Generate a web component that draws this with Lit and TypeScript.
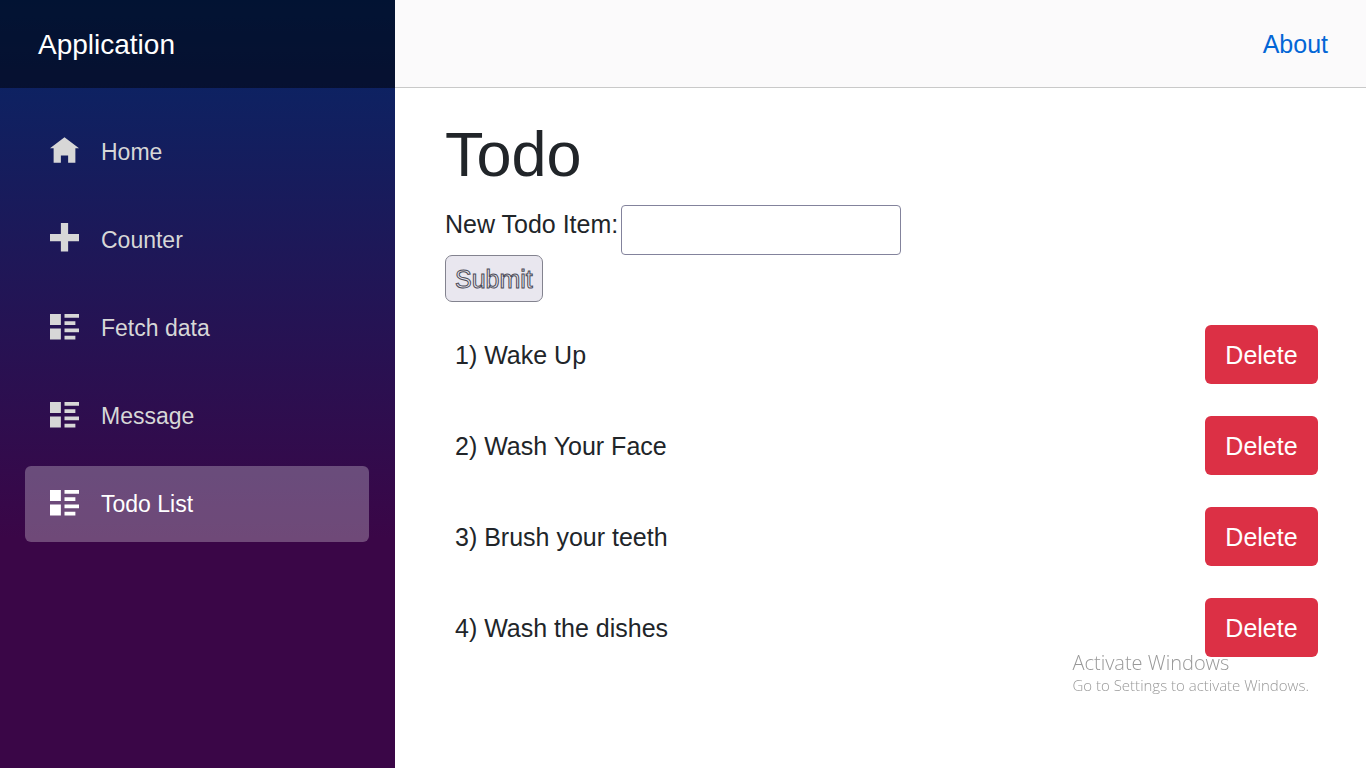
import { LitElement, html, css, svg } from "lit";
import { customElement, property, state } from "lit/decorators.js";
import { classMap } from "lit/directives/class-map.js";

const icons = {
  home: svg`<path d="M4-.2 0 2.8h1v4h2v-2h2v2h2v-4h1L4-.2z" />`,
  plus: svg`<path d="M3-.8v3H0v2h3v2.8h2V4.2h3v-2H5v-3H3z" />`,
  list: svg`<path d="M0 0v3h3V0H0zm4 0v1h4V0H4zm0 2v1h3V2H4zM0 4v3h3V4H0zm4 0v1h4V4H4zm0 2v1h3V6H4z" />`,
};

type IconName = keyof typeof icons;

interface NavItem {
  label: string;
  icon: IconName;
  active?: boolean;
}

@customElement("nav-menu")
export class NavMenu extends LitElement {
  @property({ attribute: false }) items: NavItem[] = [];

  static styles = css`
    :host {
      display: block;
    }
    .brand-row {
      display: flex;
      align-items: center;
      box-sizing: border-box;
      height: 88px;
      padding: 2px 38px 0;
      background: rgba(0, 0, 0, 0.5);
    }
    .brand {
      font-size: 28px;
      line-height: 42px;
      color: #fff;
      text-decoration: none;
    }
    .list {
      display: flex;
      flex-direction: column;
      gap: 12px;
      margin: 0;
      padding: 26px 26px 26px 25px;
      list-style: none;
    }
    .link {
      display: flex;
      align-items: center;
      height: 76px;
      padding: 0 25px;
      border-radius: 6px;
      font-size: 23px;
      color: #d7d7d7;
      text-decoration: none;
    }
    .link.active {
      background: rgba(255, 255, 255, 0.27);
      color: #fff;
    }
    .icon {
      flex: none;
      width: 29px;
      height: 29px;
      margin-right: 22px;
      overflow: visible;
      fill: currentColor;
    }
  `;

  render() {
    return html`
      <div class="brand-row"><a class="brand" href="#">Application</a></div>
      <nav>
        <ul class="list">
          ${this.items.map(
            (item) => html`<li>
              <a class=${classMap({ link: true, active: !!item.active })} href="#">
                <svg class="icon" viewBox="0 0 8 8" aria-hidden="true">${icons[item.icon]}</svg>
                ${item.label}
              </a>
            </li>`
          )}
        </ul>
      </nav>
    `;
  }
}

@customElement("todo-page")
export class TodoPage extends LitElement {
  @state() private todos = ["Wake Up", "Wash Your Face", "Brush your teeth", "Wash the dishes"];

  static styles = css`
    :host {
      display: block;
      padding: 28px 38px 28px 50px;
    }
    .title {
      margin: 0 0 13px;
      font-size: 63px;
      font-weight: 400;
      line-height: 76px;
    }
    .form {
      display: flex;
      flex-direction: column;
      align-items: flex-start;
    }
    .field {
      display: flex;
      align-items: flex-start;
      gap: 3px;
    }
    .input {
      box-sizing: border-box;
      width: 280px;
      height: 50px;
      padding: 2px 4px;
      border: 1px solid #83839c;
      border-radius: 4px;
      background: #fff;
      font: inherit;
    }
    .submit {
      height: 47px;
      padding: 0 9px;
      border: 1px solid #83838f;
      border-radius: 7px;
      background: #e9e7ef;
      font: inherit;
      color: #e9e7ef;
      -webkit-text-stroke: 1px #4c4c58;
    }
    .list {
      margin: 7px 0 0;
      padding: 0;
      list-style: none;
    }
    .row {
      display: flex;
      align-items: center;
      justify-content: space-between;
      padding: 16px 10px;
    }
    .delete {
      min-width: 113px;
      height: 59px;
      padding: 0 20px;
      border: 0;
      border-radius: 6px;
      background: #dc3045;
      color: #fff;
      font: inherit;
    }
  `;

  private add(event: Event) {
    event.preventDefault();
    const input = this.renderRoot.querySelector("input")!;
    if (!input.value) return;
    this.todos = [...this.todos, input.value];
    input.value = "";
  }

  private remove(index: number) {
    this.todos = this.todos.filter((_, i) => i !== index);
  }

  render() {
    return html`
      <h1 class="title">Todo</h1>
      <form class="form" @submit=${this.add}>
        <div class="field">
          <label for="item">New Todo Item:</label>
          <input class="input" id="item" type="text" />
        </div>
        <button class="submit" type="submit">Submit</button>
      </form>
      <ul class="list">
        ${this.todos.map(
          (todo, i) => html`<li class="row">
            <span>${i + 1}) ${todo}</span>
            <button class="delete" type="button" @click=${() => this.remove(i)}>Delete</button>
          </li>`
        )}
      </ul>
    `;
  }
}

@customElement("app-root")
export class AppRoot extends LitElement {
  private items: NavItem[] = [
    { label: "Home", icon: "home" },
    { label: "Counter", icon: "plus" },
    { label: "Fetch data", icon: "list" },
    { label: "Message", icon: "list" },
    { label: "Todo List", icon: "list", active: true },
  ];

  static styles = css`
    :host {
      display: flex;
      min-height: 100vh;
      background: #fff;
      color: #212529;
      font-family: "Liberation Sans", Arial, sans-serif;
      font-size: 25px;
      line-height: 38px;
    }
    .sidebar {
      flex: none;
      width: 395px;
      background: linear-gradient(180deg, #052767 0%, #3a0647 70%);
    }
    .main {
      flex: 1;
      min-width: 0;
    }
    .top {
      display: flex;
      align-items: center;
      justify-content: flex-end;
      box-sizing: border-box;
      height: 88px;
      padding: 0 38px;
      border-bottom: 1px solid #c9c9c9;
      background: #fbfafb;
    }
    .about {
      color: #0366d6;
      text-decoration: none;
    }
    .watermark {
      position: fixed;
      right: 57px;
      bottom: 73px;
      font-family: "Open Sans", "Noto Sans", sans-serif;
      font-weight: 300;
      color: #999;
      pointer-events: none;
    }
    .watermark-title,
    .watermark-text {
      margin: 0;
    }
    .watermark-title {
      font-size: 20px;
      line-height: 24px;
    }
    .watermark-text {
      font-size: 15px;
      line-height: 20px;
    }
  `;

  render() {
    return html`
      <nav-menu class="sidebar" .items=${this.items}></nav-menu>
      <main class="main">
        <div class="top"><a class="about" href="#">About</a></div>
        <todo-page></todo-page>
      </main>
      <div class="watermark">
        <p class="watermark-title">Activate Windows</p>
        <p class="watermark-text">Go to Settings to activate Windows.</p>
      </div>
    `;
  }
}
